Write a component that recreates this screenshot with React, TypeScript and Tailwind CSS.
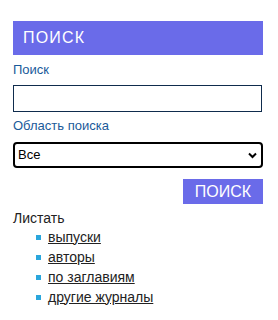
import React from "react";

export default function App() {
  const items = ["выпуски", "авторы", "по заглавиям", "другие журналы"];
  return (
    <div className="w-[278px] h-[320px] bg-white" style={{ fontFamily: '"Liberation Sans", Arial, sans-serif' }}>
      <div className="pl-[13px] pr-[15px] pt-[21px]">
        <div className="h-[34px] bg-[#6a6be9] flex items-center pl-[10px]">
          <span className="text-white text-[16px] tracking-[1.2px] leading-none">ПОИСК</span>
        </div>
        <div className="mt-[7px] text-[13px] leading-[15px] text-[#1a5a9a]">Поиск</div>
        <input className="mt-[8px] block w-[249px] h-[27px] border border-[#0f2c4d] outline-none" />
        <div className="mt-[6px] text-[13px] leading-[15px] text-[#1a5a9a]">Область поиска</div>
        <div className="mt-[9px] relative w-[250px] h-[26px] border-2 border-black rounded-[4px] flex items-center pl-[3px] text-[13px] text-black">
          Все
          <svg className="absolute right-[4px] top-[8px]" width="9" height="7" viewBox="0 0 9 7">
            <path d="M1 1.5 L4.5 5 L8 1.5" stroke="black" strokeWidth="2" fill="none" />
          </svg>
        </div>
        <div className="flex justify-end mt-[11px]">
          <button className="w-[80px] h-[25px] bg-[#6a6be9] text-white text-[16px] leading-none">ПОИСК</button>
        </div>
        <div className="mt-[6px] text-[14px] leading-[16px] text-[#222]">Листать</div>
        <ul className="mt-[1px] pl-[23px]">
          {items.map((t) => (
            <li key={t} className="flex items-center h-[20px] text-[14px] text-[#222]">
              <span className="w-[5px] h-[5px] bg-[#2aa6dc] mr-[7px]" />
              <span className="underline">{t}</span>
            </li>
          ))}
        </ul>
      </div>
    </div>
  );
}
